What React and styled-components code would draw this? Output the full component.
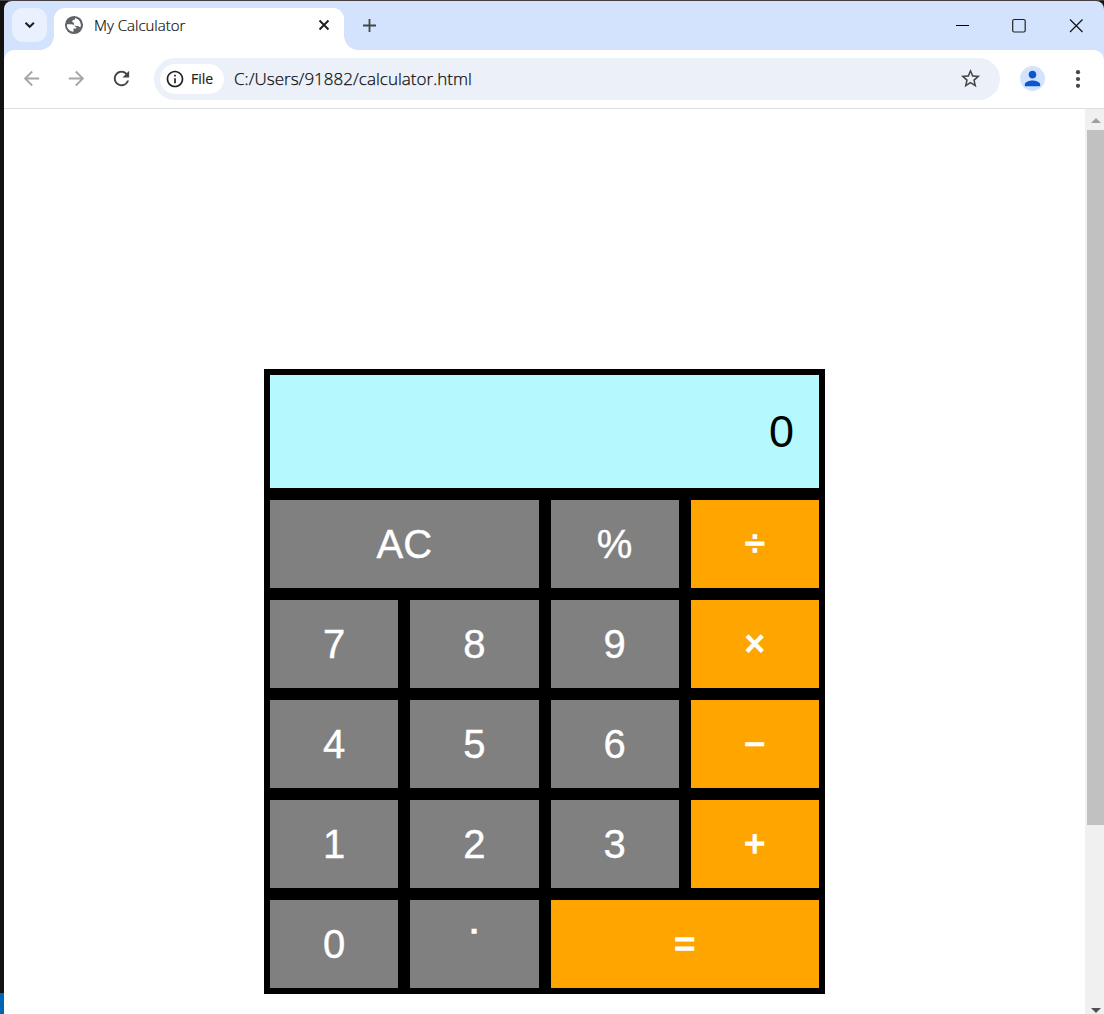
import React from 'react';
import styled, { createGlobalStyle } from 'styled-components';
import { MdArrowBack, MdArrowForward, MdRefresh, MdInfoOutline, MdStarBorder, MdPerson } from 'react-icons/md';

const Global = createGlobalStyle`
  * { box-sizing: border-box; }
  body { margin: 0; background: #141210; overflow: hidden; }
`;

const Desktop = styled.div`
  width: 1104px;
  height: 1014px;
  padding: 1px 0 0 4px;
  background: linear-gradient(#453f42 0 1px, transparent 1px), linear-gradient(#141210 0 993px, #0064b4 993px);
  font-family: "Open Sans", "Noto Sans", sans-serif;
`;

const Window = styled.div`
  height: 1013px;
  display: flex;
  flex-direction: column;
  border-radius: 8px 8px 0 0;
  overflow: hidden;
  background: #d3e2fd;
`;

const TabStrip = styled.header`
  height: 49px;
  display: flex;
  align-items: flex-start;
`;

const TabSearch = styled.button`
  width: 35px;
  height: 34px;
  margin: 7px 7px 0 8px;
  padding: 0;
  border: 0;
  border-radius: 11px;
  background: #e9f0fe;
  display: grid;
  place-items: center;
`;

const Tab = styled.div`
  position: relative;
  width: 290px;
  height: 43px;
  margin-top: 7px;
  padding: 0 13px 9px 10px;
  border-radius: 11px 11px 0 0;
  background: #fff;
  display: flex;
  align-items: center;
  gap: 10px;
  &::before, &::after {
    content: "";
    position: absolute;
    bottom: 1px;
    width: 14px;
    height: 14px;
  }
  &::before {
    left: -14px;
    background: radial-gradient(circle at 0 0, transparent 13.5px, #fff 14px);
  }
  &::after {
    right: -14px;
    background: radial-gradient(circle at 100% 0, transparent 13.5px, #fff 14px);
  }
`;

const TabTitle = styled.span`
  flex: 1;
  padding-bottom: 1px;
  font-size: 15px;
  font-weight: 300;
  line-height: 20px;
  letter-spacing: 0;
  color: #000;
  -webkit-text-stroke: 0.2px #1f1f1f;
  white-space: nowrap;
`;

const NewTab = styled.div`
  margin: 17px 0 0 18px;
  display: flex;
`;

const Controls = styled.div`
  margin: 17px 20px 0 auto;
  display: flex;
  gap: 42px;
`;

const Toolbar = styled.nav`
  height: 59px;
  flex: none;
  padding: 0 15px 1px 16px;
  display: flex;
  align-items: center;
  border-bottom: 1px solid #dedfe0;
  border-radius: 10px 10px 0 0;
  background: #fff;
`;

const NavIcons = styled.div`
  display: flex;
  width: 134px;
  gap: 22px;
  color: #a6a6a6;
`;

const Address = styled.div`
  width: 846px;
  height: 42px;
  flex: none;
  padding: 0 18px 0 6px;
  border-radius: 21px;
  background: #ebf0f9;
  display: flex;
  align-items: center;
  color: #1f1f1f;
`;

const Chip = styled.span`
  height: 30px;
  width: 64px;
  padding-left: 5px;
  border-radius: 15px;
  background: #fff;
  display: flex;
  align-items: center;
  gap: 6px;
  font-size: 14px;
  font-weight: 500;
  -webkit-text-stroke: 0.2px #1f1f1f;
`;

const Url = styled.span`
  flex: 1;
  margin-left: 10px;
  font-size: 17px;
  font-weight: 300;
  letter-spacing: 0.02px;
  color: #000;
  -webkit-text-stroke: 0.25px #1f1f1f;
`;

const Avatar = styled.span`
  width: 25px;
  height: 25px;
  flex: none;
  margin: 0 22px 0 20px;
  border-radius: 50%;
  background: #d3e3fd;
  color: #0b57d0;
  display: grid;
  place-items: center;
`;

const Viewport = styled.div`
  flex: 1;
  display: flex;
  background: #fff;
`;

const Page = styled.main`
  flex: 1;
  padding: 260px 0 0 260px;
`;

const ScrollTrack = styled.aside`
  width: 19px;
  padding: 9px 0 1px 2px;
  background: #f0f0f0;
  display: flex;
  flex-direction: column;
`;

const ArrowUp = styled.i`
  margin-left: 4px;
  align-self: flex-start;
  border: 5px solid transparent;
  border-top: 0;
  border-bottom: 5px solid #a0a0a0;
`;

const Thumb = styled.div`
  height: 695px;
  margin-top: 7px;
  background: #c1c1c1;
`;

const ArrowDown = styled.i`
  margin-left: 4px;
  align-self: flex-start;
  margin-top: auto;
  border: 5px solid transparent;
  border-bottom: 0;
  border-top: 5px solid #505050;
`;

const Calculator = styled.section`
  width: 561px;
  padding: 6px;
  background: #000;
  display: grid;
  grid-template-columns: repeat(4, 1fr);
  grid-template-rows: 113px repeat(5, 88px);
  gap: 12px;
  font-family: "Liberation Sans", Arial, sans-serif;
`;

const Display = styled.output`
  grid-column: 1 / -1;
  padding: 0 25px 0 0;
  background: #b5f9ff;
  color: #000;
  font-size: 45px;
  display: flex;
  align-items: center;
  justify-content: flex-end;
`;

const Key = styled.button`
  grid-column: span ${(p) => p.$span || 1};
  padding: ${(p) => (p.$dot ? '3px 0 0 3px' : '0')};
  border: 0;
  background: ${(p) => (p.$op ? 'orange' : 'gray')};
  color: #fff;
  font-family: inherit;
  font-size: ${(p) => (p.$op ? '36px' : '40px')};
  -webkit-text-stroke: ${(p) => (p.$op || p.$dot ? '1.5px' : '0.4px')} #fff;
`;

const keys = [
  { t: 'AC', span: 2 }, { t: '%' }, { t: '÷', op: true },
  { t: '7' }, { t: '8' }, { t: '9' }, { t: '×', op: true },
  { t: '4' }, { t: '5' }, { t: '6' }, { t: '−', op: true },
  { t: '1' }, { t: '2' }, { t: '3' }, { t: '+', op: true },
  { t: '0' }, { t: '˙', dot: true }, { t: '=', span: 2, op: true },
];

export default function App() {
  return (
    <>
      <Global />
      <Desktop>
        <Window>
          <TabStrip>
            <TabSearch>
              <svg width="12" height="12" viewBox="0 0 12 12" fill="none" stroke="#1f1f1f" strokeWidth="2">
                <path d="M1.500 3.700 5.700 7.800l4.200-4.100" />
              </svg>
            </TabSearch>
            <Tab>
              <svg width="20" height="20" viewBox="0 0 20 20">
                <circle cx="10" cy="10" r="8.200" fill="#5f6368" />
                <path fill="#fff" d="M2.800 9.300h4.700c2 0 3.400.9 3.400 2.500h1.400v1.600H9.500v3.300C5.400 17 2 13.200 2.800 9.300zM11 2.900v1.500c-1.700.1-2.700.8-2.700 1.900 0 1 .8 1.500 1.700 1.500v1.400c0 1 .8 1.700 2 1.700h1.600c.8 0 1.300.5 1.800 1.200h1.400c-.6 2-1.800 3.500-3.800 4.300 4.600-1.900 5.300-9 1-12.100-.8-.6-2-1.200-3-1.400z" />
                <circle cx="10" cy="10" r="8.100" fill="none" stroke="#5f6368" strokeWidth="1.900" />
              </svg>
              <TabTitle>My Calculator</TabTitle>
              <svg width="14" height="14" viewBox="0 0 14 14" stroke="#1f1f1f" strokeWidth="1.900">
                <path d="m2.500 2.500 9 9m0-9-9 9" />
              </svg>
            </Tab>
            <NewTab>
              <svg width="15" height="15" viewBox="0 0 15 15" stroke="#444746" strokeWidth="1.800">
                <path d="M7.500 1v13M1 7.500h13" />
              </svg>
            </NewTab>
            <Controls>
              <svg width="15" height="15" viewBox="0 0 15 15"><path d="M1 7.500h13" stroke="#000" /></svg>
              <svg width="15" height="15" viewBox="0 0 15 15" fill="none" stroke="#222" strokeWidth="1.200">
                <rect x="0.700" y="1.500" width="12.500" height="12.500" rx="1.500" />
              </svg>
              <svg width="15" height="15" viewBox="0 0 15 15" stroke="#111" strokeWidth="1.200"><path d="m1 1.500 12.500 12.500m0-12.500L1 14" /></svg>
            </Controls>
          </TabStrip>
          <Toolbar>
            <NavIcons>
              <MdArrowBack size={23} />
              <MdArrowForward size={23} />
              <MdRefresh size={23} color="#444746" />
            </NavIcons>
            <Address>
              <Chip><MdInfoOutline size={20} />File</Chip>
              <Url>C:/Users/91882/calculator.html</Url>
              <MdStarBorder size={23} color="#444746" />
            </Address>
            <Avatar><MdPerson size={23} /></Avatar>
            <svg width="22" height="22" viewBox="0 0 22 22" fill="#444746">
              <circle cx="11" cy="4.200" r="2.100" /><circle cx="11" cy="11" r="2.100" /><circle cx="11" cy="17.800" r="2.100" />
            </svg>
          </Toolbar>
          <Viewport>
            <Page>
              <Calculator>
                <Display>0</Display>
                {keys.map((k) => (
                  <Key key={k.t} $span={k.span} $op={k.op} $dot={k.dot}>{k.t}</Key>
                ))}
              </Calculator>
            </Page>
            <ScrollTrack>
              <ArrowUp />
              <Thumb />
              <ArrowDown />
            </ScrollTrack>
          </Viewport>
        </Window>
      </Desktop>
    </>
  );
}
